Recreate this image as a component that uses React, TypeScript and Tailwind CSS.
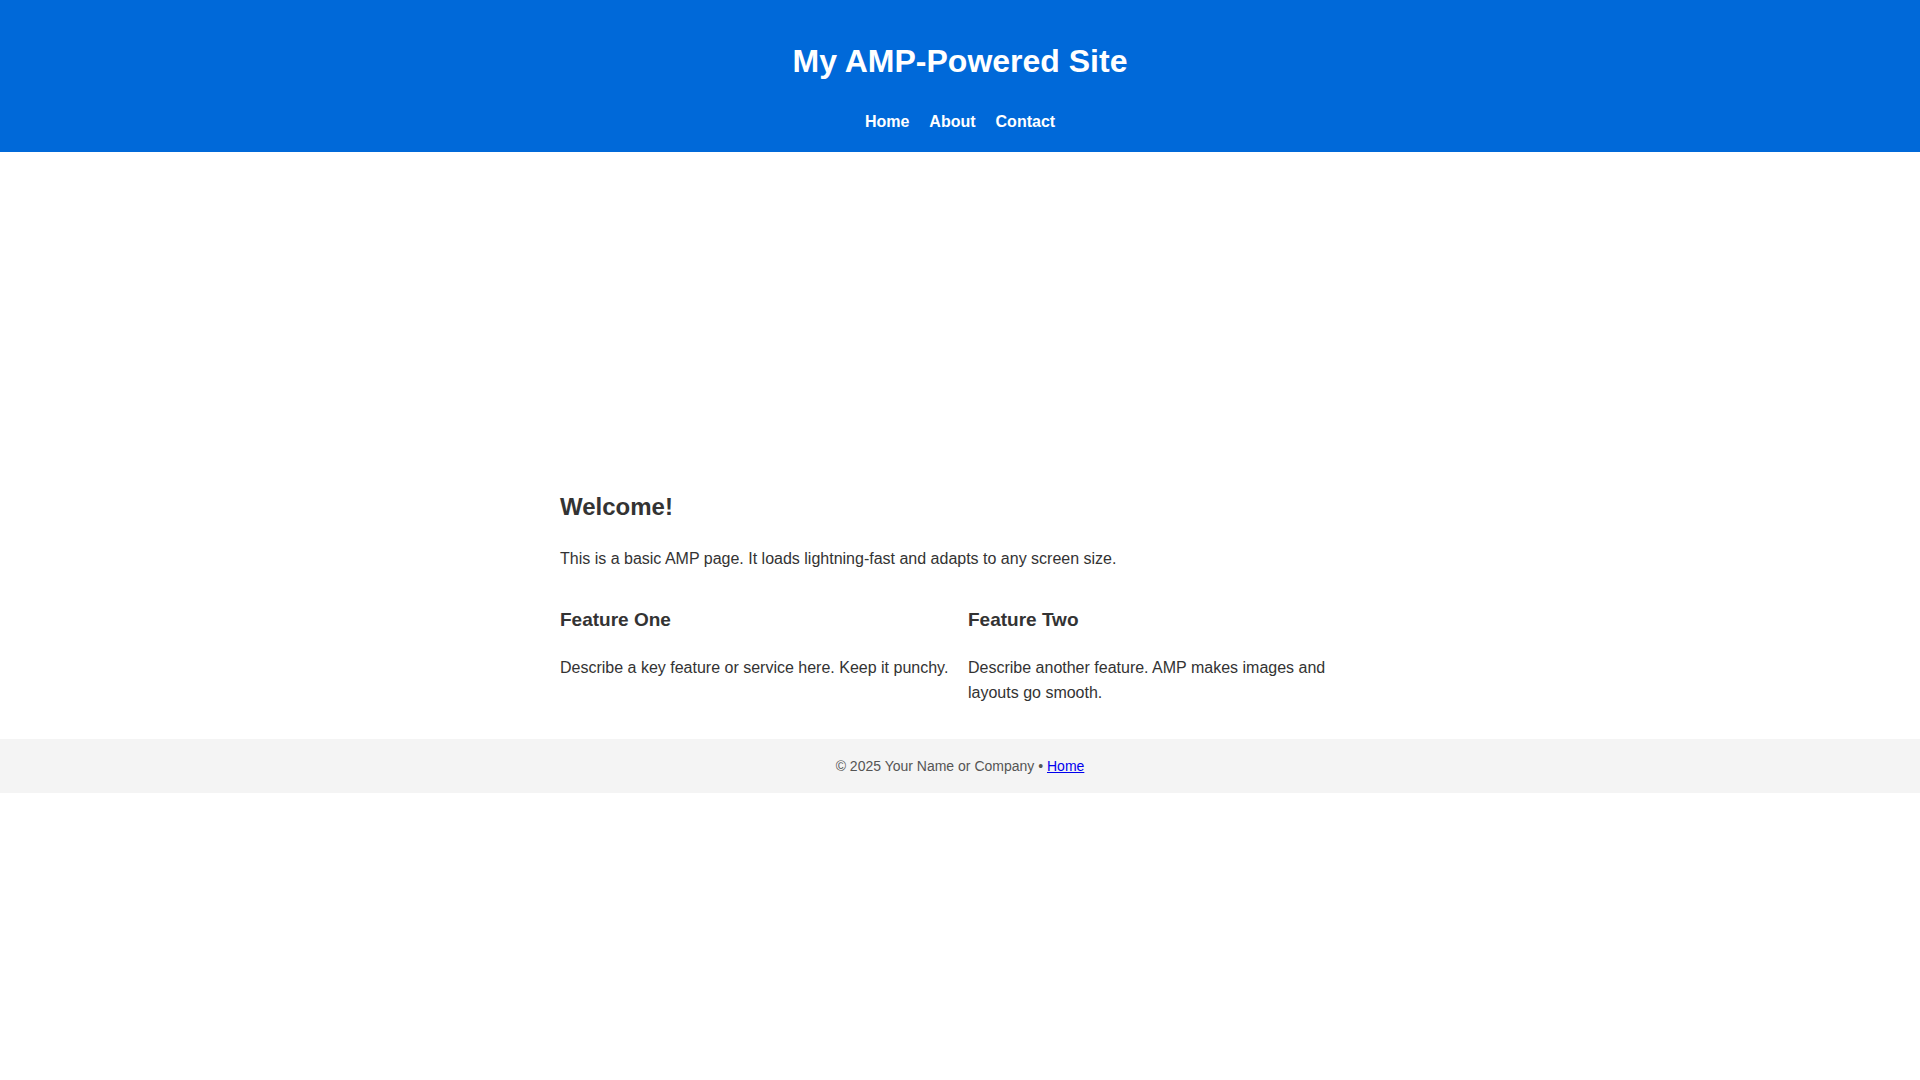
export default function App() {
  return (
    <div className="min-h-[1080px] bg-white text-[#333]" style={{ fontFamily: '"Liberation Sans", Arial, sans-serif' }}>
      <header className="h-[152px] bg-[#0069d9] text-white flex flex-col items-center">
        <h1 className="mt-[41px] text-[32px] leading-[40px] font-bold">My AMP-Powered Site</h1>
        <nav className="mt-[31px] flex gap-[20px] text-[16px] leading-[20px] font-bold">
          <a>Home</a>
          <a>About</a>
          <a>Contact</a>
        </nav>
      </header>
      <main className="w-[800px] mx-auto pt-[340px] pb-[34px]">
        <h2 className="text-[24px] leading-[30px] font-bold">Welcome!</h2>
        <p className="mt-[24px] text-[16px] leading-[25px]">This is a basic AMP page. It loads lightning-fast and adapts to any screen size.</p>
        <div className="mt-[37px] grid grid-cols-2 gap-[16px]">
          <div>
            <h3 className="text-[19px] leading-[24px] font-bold">Feature One</h3>
            <p className="mt-[23px] text-[16px] leading-[25px]">Describe a key feature or service here. Keep it punchy.</p>
          </div>
          <div>
            <h3 className="text-[19px] leading-[24px] font-bold">Feature Two</h3>
            <p className="mt-[23px] text-[16px] leading-[25px]">Describe another feature. AMP makes images and layouts go smooth.</p>
          </div>
        </div>
      </main>
      <footer className="h-[54px] bg-[#f4f4f4] flex items-center justify-center text-[14px] text-[#555]">
        © 2025 Your Name or Company •&nbsp;<a className="text-[#0000ee] underline">Home</a>
      </footer>
    </div>
  );
}
